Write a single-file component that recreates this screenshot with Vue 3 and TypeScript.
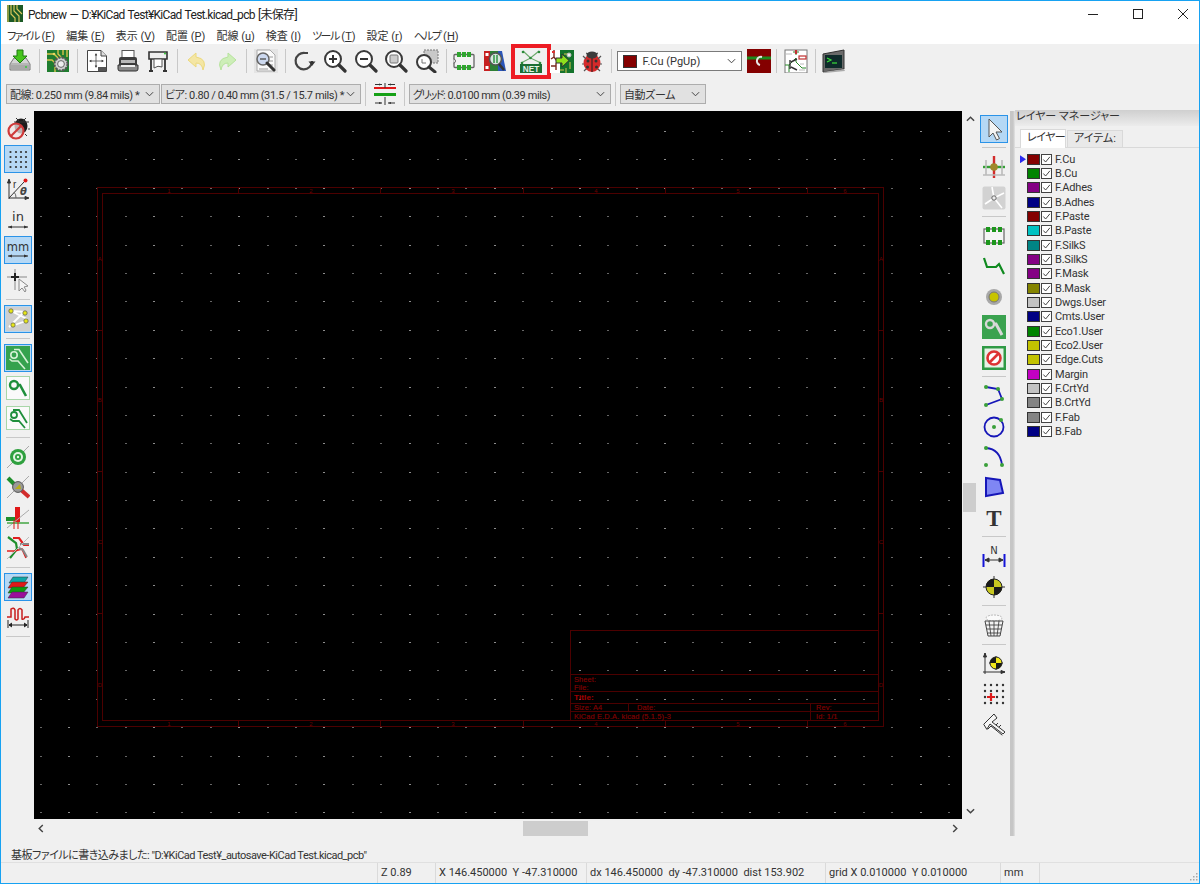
<script setup lang="ts">
const S = 'stroke-linecap="round" stroke-linejoin="round"'

// inner svg markup of every toolbar icon, 24x24 box
const icons: Record<string, string> = {
  save: `<path d="M2 15 L6 9 H18 L22 15 V21 H2Z" fill="#d4d4d4" stroke="#777"/><path d="M2 15 H22" stroke="#999"/><rect x="3" y="16" width="18" height="4.5" fill="#a9a9a9"/><circle cx="18" cy="18" r="1" fill="#37c837"/><path d="M9 1 H15 V7 H19 L12 14 L5 7 H9Z" fill="#46c41c" stroke="#1f7a10"/>`,
  pcbgear: `<rect x="1" y="1" width="22" height="22" fill="#1f7d2f"/><path d="M1 5 H8 L13 10 M1 11 H6 L9 14 V23 M12 1 V5 L15 8 M17 1 V6 M21 1 V8" stroke="#d8c24c" stroke-width="1.4" fill="none"/><circle cx="8" cy="5" r="1.3" fill="#e8d860"/><circle cx="15" cy="15" r="6.5" fill="#d0d0d0" stroke="#555" stroke-dasharray="2.2 1.2" stroke-width="2"/><circle cx="15" cy="15" r="3.4" fill="#eee" stroke="#666"/>`,
  page: `<path d="M2.5 1.5 H16 L21.5 7 V22.5 H2.5Z" fill="#fff" stroke="#444"/><path d="M16 1.5 V7 H21.5" fill="#ddd" stroke="#444"/><path d="M11 5 V18 M5 12 H18" stroke="#444" stroke-width=".8"/><path d="M11 4 l-1.2 2.4 h2.4Z M11 19 l-1.2 -2.4 h2.4Z M4 12 l2.4 -1.2 v2.4Z M19 12 l-2.4 -1.2 v2.4Z" fill="#333"/><rect x="13" y="18" width="8" height="4" fill="#555"/>`,
  print: `<rect x="6" y="1.5" width="12" height="7" fill="#fff" stroke="#555"/><path d="M3 10 Q3 8 5 8 H19 Q21 8 21 10 V19 H3Z" fill="#3e3e3e"/><rect x="5" y="11" width="14" height="3" fill="#b8b8b8"/><path d="M2 16 H22 V20 Q22 22 20 22 H4 Q2 22 2 20Z" fill="#888" stroke="#333"/><rect x="5" y="16" width="14" height="2" fill="#eee"/>`,
  plot: `<path d="M3 3 H21 V10 H3Z" fill="#eee" stroke="#333" stroke-width="1.6"/><circle cx="19" cy="4.5" r="1" fill="#2fbf2f"/><path d="M5 10 V22 M19 10 V22 M3 22 H7 M17 22 H21" stroke="#333" stroke-width="1.8" fill="none"/><path d="M8 10 H16 V18 Q12 16 8 19Z" fill="#fff" stroke="#555"/>`,
  undo: `<path d="M11 4 L3 11 L11 18 V14 Q17 14 18 21 Q23 10 11 8Z" fill="#f4e6a4" stroke="#ecd97c"/>`,
  redo: `<path d="M13 4 L21 11 L13 18 V14 Q7 14 6 21 Q1 10 13 8Z" fill="#cdeeb8" stroke="#b6e39c"/>`,
  find: `<rect x="0" y="0" width="24" height="24" fill="#e4e4e4"/><path d="M3 1 H16 L21 6 V22 H3Z" fill="#fafafa" stroke="#aaa"/><path d="M14 8 H19 M15 12 H19 M14 16 H19 M5 20 H14" stroke="#9a9a9a"/><circle cx="9" cy="10" r="6" fill="#cdd9ef" stroke="#666" stroke-width="1.5"/><path d="M6 10 H12" stroke="#555" stroke-width="1.4"/><path d="M13 14 L20 21" stroke="#333" stroke-width="3" stroke-linecap="round"/>`,
  redraw: `<path d="M19 12 A8.2 8.2 0 1 1 12 4 H15" fill="none" stroke="#444" stroke-width="2.2"/><path d="M15.5 12.5 H22.5 L19 17Z" fill="#333"/>`,
  zoomin: `<circle cx="10" cy="10" r="8" fill="#fff" stroke="#3a3a3a" stroke-width="2"/><path d="M6 10 H14 M10 6 V14" stroke="#333" stroke-width="2"/><path d="M16 16 L22 22" stroke="#333" stroke-width="3.2" stroke-linecap="round"/>`,
  zoomout: `<circle cx="10" cy="10" r="8" fill="#fff" stroke="#3a3a3a" stroke-width="2"/><path d="M6 10 H14" stroke="#333" stroke-width="2"/><path d="M16 16 L22 22" stroke="#333" stroke-width="3.2" stroke-linecap="round"/>`,
  zoomfit: `<circle cx="10" cy="10" r="8" fill="#fff" stroke="#3a3a3a" stroke-width="2"/><rect x="6" y="6" width="8" height="8" rx="1" fill="#ccc" stroke="#777"/><path d="M16 16 L22 22" stroke="#333" stroke-width="3.2" stroke-linecap="round"/>`,
  zoomsel: `<rect x="9" y="1" width="14" height="13" fill="#c8c8c8" stroke="#777" stroke-dasharray="2 1"/><circle cx="9" cy="13" r="7" fill="#fff" stroke="#3a3a3a" stroke-width="2"/><path d="M7 10 V14 H11" fill="none" stroke="#777"/><path d="M14 18 L20 23" stroke="#333" stroke-width="3" stroke-linecap="round"/>`,
  footprint: `<rect x="2" y="5.5" width="20" height="13" fill="#f3f3f3" stroke="#666" stroke-width="1.3" rx="1"/><path d="M1.5 10 a2 2 0 0 1 0 4" fill="#f0f0f0" stroke="#666"/><path d="M5 3 h4 v5 h-4Z M10 3 h4 v5 h-4Z M15 3 h4 v5 h-4Z M5 16 h4 v5 h-4Z M10 16 h4 v5 h-4Z M15 16 h4 v5 h-4Z" fill="#2fa52f"/>`,
  lib: `<rect x="1" y="2" width="8" height="20" fill="#c62020"/><rect x="2.5" y="4" width="3" height="3" fill="#fff"/><rect x="2.5" y="17" width="3" height="3" fill="#fff"/><rect x="7" y="2" width="8" height="20" fill="#2d7f35"/><path d="M15 2 H19 L23 22 H15Z" fill="#2a55b8"/><circle cx="12.5" cy="10" r="6" fill="#d8e7e0" stroke="#555" stroke-width="1.6"/><path d="M11 6 V14 M14 6 V14" stroke="#3c9a50" stroke-width="1.6"/><path d="M16 15 L21 21" stroke="#333" stroke-width="2.6"/>`,
  net: `<path d="M4 2 L11.5 9 L20 2 M2 14 L11.5 9 L22 14" fill="none" stroke="#6ba86b" stroke-width="1.1"/><circle cx="4" cy="3" r="1.3" fill="#2c8a3a"/><circle cx="20" cy="3" r="1.3" fill="#2c8a3a"/><circle cx="11.5" cy="9" r="1.3" fill="#2c8a3a"/><circle cx="3" cy="14" r="1.3" fill="#2c8a3a"/><circle cx="21" cy="14" r="1.3" fill="#2c8a3a"/><rect x="1" y="15" width="22" height="9" fill="#1c6e34"/><text x="12" y="22.6" text-anchor="middle" font-family="Liberation Sans, sans-serif" font-size="8.2" font-weight="700" fill="#e8f2e8">NET</text>`,
  update: `<rect x="0" y="1" width="10" height="23" fill="#fff"/><path d="M4 1 V8 M4 8 L1 10 M4 8 L7 12 M1 17 H6 M6 14 V21" stroke="#7a2a20" stroke-width="1.4" fill="none"/><rect x="2" y="2" width="3" height="2" fill="#d33"/><rect x="10" y="1" width="14" height="23" fill="#14732c"/><path d="M14 5 H20 M16 19 V24 M20 13 V20 M10 21 H14" stroke="#d8c24c" fill="none"/><circle cx="19" cy="6" r="2" fill="#f3f3f3" stroke="#bbb"/><path d="M6 9 H12 V5 L19 11.5 L12 18 V14 H6Z" fill="#8de01d" stroke="#333"/>`,
  bug: `<ellipse cx="12" cy="14" rx="8.5" ry="9" fill="#d62a2a"/><path d="M12 5 V23" stroke="#222"/><path d="M6 4 Q9 6 12 6 Q15 6 18 4" fill="none" stroke="#333"/><ellipse cx="12" cy="6" rx="5.5" ry="3.4" fill="#3c3c3c"/><path d="M3 7 L6 10 M21 7 L18 10 M2 15 H4 M22 15 H20 M4 22 L6 20 M20 22 L18 20" stroke="#555" stroke-width="1.2"/><circle cx="8" cy="12" r="1.5" fill="#333"/><circle cx="16" cy="12" r="1.5" fill="#333"/><circle cx="7.5" cy="18" r="1.5" fill="#333"/><circle cx="16.5" cy="18" r="1.5" fill="#333"/>`,
  via: `<rect x="0" y="0" width="24" height="24" fill="#840000"/><path d="M0 9 H24" stroke="#1e8a1e" stroke-width="3"/><path d="M15 8 A4 4 0 1 0 13 16" fill="none" stroke="#e8e8e8" stroke-width="2"/>`,
  sch: `<rect x="1" y="1" width="22" height="23" fill="#fff" stroke="#777"/><path d="M12 1 V6 M9 3 H15 M12 13 V9 L5 16 V23 M12 13 L18 19 H22 M5 16 H1" stroke="#2a8a2a" fill="none"/><path d="M12 1 V5" stroke="#c03030" stroke-width="2.2"/><rect x="15" y="7" width="7" height="3" fill="#fff" stroke="#c03030" stroke-width="1.2"/><path d="M6 11 V20 M7 13 L13 10 M7 18 L13 21" stroke="#333" stroke-width="1.4"/><path d="M16 15 H20 M2 5 H8 M15 21 H21" stroke="#bbb"/>`,
  term: `<path d="M1 5 L22 1 V20 L1 23Z" fill="#6a6a6a" stroke="#333"/><rect x="3" y="6" width="17" height="13" fill="#0e2a2a"/><path d="M5 9 L9 11 L5 13" fill="none" stroke="#3be03b" stroke-width="1.2"/><path d="M10 14 H15" stroke="#3be03b" stroke-width="1.2"/><path d="M1 23 L22 20 L23 22 L3 24Z" fill="#aaa"/>`,

  bugoff: `<ellipse cx="15" cy="9" rx="6.5" ry="7.5" fill="#1c1c1c"/><path d="M10 1 L13 4 M20 1 L17 4 M8 5 H23 M22 12 H24 M19 17 L21 19" stroke="#333"/><circle cx="10" cy="14" r="7.5" fill="#f1e4e4" fill-opacity=".75" stroke="#cf3a3a" stroke-width="2.2"/><path d="M5 19 L15 9" stroke="#cf3a3a" stroke-width="2.2"/>`,
  grid: `<g fill="#333"><circle cx="4.5" cy="5" r="1.1"/><circle cx="10" cy="5" r="1.1"/><circle cx="15" cy="5" r="1.1"/><circle cx="20" cy="5" r="1.1"/><circle cx="4.5" cy="10" r="1.1"/><circle cx="10" cy="10" r="1.1"/><circle cx="15" cy="10" r="1.1"/><circle cx="20" cy="10" r="1.1"/><circle cx="4.5" cy="15" r="1.1"/><circle cx="10" cy="15" r="1.1"/><circle cx="15" cy="15" r="1.1"/><circle cx="20" cy="15" r="1.1"/><circle cx="4.5" cy="20" r="1.1"/><circle cx="10" cy="20" r="1.1"/><circle cx="15" cy="20" r="1.1"/><circle cx="20" cy="20" r="1.1"/></g>`,
  polar: `<path d="M3 22 V3 M1.5 6 L3 2 L4.5 6Z M3 21 H22 M19 19.5 L23 21 L19 22.5Z" stroke="#333" fill="#333"/><path d="M3 21 L18 5" stroke="#333"/><path d="M10 21 A8 8 0 0 0 8 15" fill="none" stroke="#666"/><circle cx="19.5" cy="3.5" r="2" fill="#e01818"/><text x="7" y="11" font-family="Liberation Sans, sans-serif" font-size="10" fill="#333">r</text><text x="14" y="18" font-family="DejaVu Sans, sans-serif" font-size="10" font-style="italic" font-weight="700" fill="#444">θ</text>`,
  inch: `<text x="12" y="13" text-anchor="middle" font-family="DejaVu Sans, sans-serif" font-size="13" fill="#333">in</text><path d="M2 19 H22" stroke="#333"/><path d="M6 17.5 L2 19 L6 20.5Z M18 17.5 L22 19 L18 20.5Z" fill="#333"/>`,
  mm: `<text x="12" y="12.5" text-anchor="middle" font-family="DejaVu Sans, sans-serif" font-size="11.5" fill="#333">mm</text><path d="M2 18 H22" stroke="#333"/><path d="M6 16.5 L2 18 L6 19.5Z M18 16.5 L22 18 L18 19.5Z" fill="#333"/>`,
  cursor: `<path d="M9 1 V22 M1 9 H21" stroke="#888"/><path d="M9 5 V13 M5 9 H13" stroke="#222" stroke-width="2"/><path d="M13 11 V23 L16 20 L19 24 L20 22 L18 19 L22 18Z" fill="#f4f4f4" stroke="#888"/>`,
  ratsnest: `<rect x="0" y="0" width="24" height="24" fill="#cfcfcf"/><path d="M5 4 L21 12 M18 5 L3 20 M5 4 L20 5 M3 20 L20 14" stroke="#fff" stroke-width="1.8"/><circle cx="5" cy="4" r="2.2" fill="#e6e618" stroke="#555" stroke-width=".7"/><circle cx="19" cy="6" r="2.2" fill="#e6e618" stroke="#555" stroke-width=".7"/><circle cx="20" cy="14" r="2.2" fill="#e6e618" stroke="#555" stroke-width=".7"/><circle cx="7" cy="18" r="2.2" fill="#e6e618" stroke="#555" stroke-width=".7"/>`,
  zonefill: `<rect x="0" y="0" width="24" height="24" fill="#35a24e"/><circle cx="8" cy="9" r="3.2" fill="none" stroke="#d6f1d6" stroke-width="1.6"/><path d="M8 3.5 H13 L22 17 M3.5 13 L6 15 H12 L19 23" fill="none" stroke="#d6f1d6" stroke-width="1.6"/>`,
  zonenet: `<rect x=".5" y=".5" width="23" height="23" fill="#fafafa" stroke="#a8d6a8"/><circle cx="8" cy="9" r="4" fill="none" stroke="#1f8f3c" stroke-width="2.4"/><path d="M12 9 H14 L20 20" fill="none" stroke="#1f8f3c" stroke-width="2.6"/>`,
  zoneline: `<rect x=".5" y=".5" width="23" height="23" fill="#fafafa" stroke="#a8d6a8"/><circle cx="8" cy="9" r="3" fill="none" stroke="#1f8f3c" stroke-width="1.8"/><path d="M7 4 H13 L21 17 M4 13 L7 15 H13 L19 22" fill="none" stroke="#1f8f3c" stroke-width="1.8"/>`,
  pad: `<path d="M1 23 L23 1" stroke="#aaa"/><circle cx="12" cy="12" r="8" fill="#2fa03f"/><circle cx="12" cy="12" r="5" fill="#e4f4e4"/><circle cx="12" cy="12" r="3" fill="#2fa03f"/><circle cx="12" cy="12" r="1.2" fill="#e4f4e4"/>`,
  trackvia: `<path d="M2 3 L10 11" stroke="#1f8f2c" stroke-width="4"/><path d="M14 14 L23 22" stroke="#d22c2c" stroke-width="4"/><path d="M1 23 L23 1" stroke="#aaa"/><circle cx="12" cy="12" r="5.4" fill="#999" stroke="#555"/><path d="M9 14 L14 9 L15 14Z" fill="#b8ad1c"/>`,
  trackwide: `<path d="M1 14 H9 V12 H1Z" fill="#1f8f2c" stroke="#1f8f2c" stroke-width="2"/><path d="M9 1 H14 V16 H9Z" fill="#e01818"/><path d="M1 22 L23 4" stroke="#aaa"/><path d="M1 17 H23" stroke="#36a036" stroke-width="1.4"/><path d="M8 14 V23 M12 14 V23" stroke="#e01818"/>`,
  viacross: `<path d="M2 1 L10 7 L11 13 L4 22" fill="none" stroke="#1f8f2c" stroke-width="2.2"/><path d="M7 2 L13 2 L18 9 L23 9" fill="none" stroke="#e02020" stroke-width="2.2"/><path d="M1 15 H9 L16 13 L20 22" fill="none" stroke="#e02020" stroke-width="1.6"/><path d="M13 12 L17 14 L21 21 M14 8 H23" fill="none" stroke="#888" stroke-width="2"/><path d="M1 23 L23 1" stroke="#bbb"/>`,
  layers: `<path d="M7 2 H22 L18 8 H3Z" fill="#0fa7a7" stroke="#333" stroke-width=".5"/><path d="M6 7 H22 L17 13 H2Z" fill="#e01818" stroke="#333" stroke-width=".5"/><path d="M6 12 H22 L17 18 H2Z" fill="#109a10" stroke="#333" stroke-width=".5"/><path d="M6 17 H22 L18 23 H2Z" fill="#9a0f9a" stroke="#333" stroke-width=".5"/>`,
  length: `<path d="M1 12 H5 V4 Q8 2 9 5 V14 Q11 16 12 14 V5 Q14 2 16 5 V14 Q18 15 19 12 H23" fill="none" stroke="#c81e1e" stroke-width="1.5"/><path d="M2 15 V23 M22 15 V23 M3 20 H21 M6 18 L3 20 L6 22 M18 18 L21 20 L18 22" stroke="#222" fill="#222"/>`,

  select: `<path d="M7 2 V20 L11 16 L14.5 23 L17.5 21.5 L14 15 H20Z" fill="#f4f4f4" stroke="#555"/>`,
  hilight: `<path d="M12 1 V23" stroke="#d22c2c" stroke-width="2.4"/><path d="M1 12 H23" stroke="#36a036" stroke-width="2.4"/><path d="M4 5 V20 M20 5 V20 M1 20 H23" stroke="#bbb" stroke-width="1.6"/><circle cx="12" cy="12" r="3.8" fill="#a0882c"/>`,
  local: `<rect x=".5" y=".5" width="23" height="23" rx="2" fill="#d2d2d2"/><path d="M12 12 L3 18 M12 12 L22 7 M12 12 L20 22 M12 12 L10 1" stroke="#fff" stroke-width="1.6"/><circle cx="12" cy="12" r="2.2" fill="#eee" stroke="#666"/>`,
  module: `<rect x="2" y="5" width="20" height="14" fill="#f5f5f5" stroke="#666" stroke-width="1.2"/><path d="M4 3 h4 v5 h-4Z M10 3 h4 v5 h-4Z M16 3 h4 v5 h-4Z M4 16 h4 v5 h-4Z M10 16 h4 v5 h-4Z M16 16 h4 v5 h-4Z" fill="#1c961c"/>`,
  track: `<path d="M2 4 L5 13 H14 L17 10 L22 20" fill="none" stroke="#0f8a1f" stroke-width="2.2"/>`,
  viaicon: `<circle cx="12" cy="12" r="8" fill="#a8a8a8"/><circle cx="12" cy="12" r="5" fill="#c8c400" stroke="#777"/>`,
  zone: `<rect x="0" y="0" width="24" height="24" fill="#3aa24f"/><circle cx="8" cy="9" r="4" fill="none" stroke="#d8d8d8" stroke-width="2.4"/><path d="M12 9 H14 L20 20" fill="none" stroke="#d8d8d8" stroke-width="3"/>`,
  keepout: `<rect x="0" y="0" width="24" height="24" fill="#2f9a45"/><rect x="2.5" y="2.5" width="19" height="19" fill="#e7f2e7"/><circle cx="12" cy="12" r="6.5" fill="#fff" stroke="#d33" stroke-width="2.6"/><path d="M7.5 16.5 L16.5 7.5" stroke="#d33" stroke-width="2.6"/>`,
  polyline: `<path d="M4 3 L16 5 L20 15 L4 21" fill="none" stroke="#1616b8" stroke-width="1.8"/><circle cx="4" cy="3" r="2" fill="#3aa03a"/><circle cx="16" cy="5" r="2" fill="#3aa03a"/><circle cx="20" cy="15" r="2" fill="#3aa03a"/><circle cx="4" cy="21" r="2" fill="#3aa03a"/>`,
  circle: `<circle cx="12" cy="12" r="9.5" fill="none" stroke="#1616b8" stroke-width="1.8"/><circle cx="12" cy="12" r="2" fill="#3aa03a"/><circle cx="19" cy="5" r="2" fill="#3aa03a"/>`,
  arc: `<path d="M4 3 Q18 4 20 20" fill="none" stroke="#1616b8" stroke-width="1.8"/><circle cx="4" cy="3" r="2" fill="#3aa03a"/><circle cx="20" cy="20" r="2" fill="#3aa03a"/><circle cx="4" cy="20" r="2" fill="#3aa03a"/>`,
  poly: `<path d="M4 3 L18 5 L21 18 L4 21Z" fill="#7f86f4" stroke="#1616b8" stroke-width="2"/>`,
  textt: `<text x="12" y="20" text-anchor="middle" font-family="Liberation Serif, serif" font-size="23" font-weight="700" fill="#333">T</text>`,
  dim: `<text x="12" y="10" text-anchor="middle" font-family="DejaVu Sans, sans-serif" font-size="10" fill="#333">N</text><path d="M1.5 10 V23 M22.5 10 V23" stroke="#1414d8" stroke-width="2"/><path d="M3 16 H21 M7 14 L3 16 L7 18Z M17 14 L21 16 L17 18Z" fill="#333" stroke="#333"/>`,
  target: `<path d="M12 1 V23 M1 12 H23" stroke="#333"/><circle cx="12" cy="12" r="8" fill="#c8c820" stroke="#222"/><path d="M12 4 A8 8 0 0 0 4 12 H12Z M12 20 A8 8 0 0 0 20 12 H12Z" fill="#1a1a1a"/>`,
  trash: `<ellipse cx="12" cy="5" rx="8" ry="3" fill="#fafafa" stroke="#bbb" stroke-dasharray="2 1"/><path d="M3 8 H21 L18 23 H6Z" fill="#f2f2f2" stroke="#444"/><path d="M7 8 L9 23 M12 8 V23 M17 8 L15 23 M4 12 H20 M5 16 H19 M6 20 H18" stroke="#444" stroke-width=".9"/>`,
  origin: `<path d="M3 1 V22 M1 20 H23 M1.5 5 L3 1 L4.5 5Z M19 18.5 L23 20 L19 21.5Z" fill="#333" stroke="#333"/><path d="M14 4 V18 M7 11 H21" stroke="#333"/><circle cx="14" cy="11" r="6" fill="#f0e61c" stroke="#222"/><path d="M14 5 A6 6 0 0 0 8 11 H14Z M14 17 A6 6 0 0 0 20 11 H14Z" fill="#1a1a1a"/>`,
  gridorigin: `<g fill="#333"><circle cx="3" cy="3" r="1.2"/><circle cx="9" cy="3" r="1.2"/><circle cx="15" cy="3" r="1.2"/><circle cx="21" cy="3" r="1.2"/><circle cx="3" cy="9" r="1.2"/><circle cx="9" cy="9" r="1.2"/><circle cx="15" cy="9" r="1.2"/><circle cx="21" cy="9" r="1.2"/><circle cx="3" cy="15" r="1.2"/><circle cx="15" cy="15" r="1.2"/><circle cx="21" cy="15" r="1.2"/><circle cx="3" cy="21" r="1.2"/><circle cx="9" cy="21" r="1.2"/><circle cx="15" cy="21" r="1.2"/><circle cx="21" cy="21" r="1.2"/></g><path d="M9 11 V19 M5 15 H13" stroke="#dc1a1a" stroke-width="2.2"/>`,
  caliper: `<path d="M2 12 L12 2 L15 6 L10 10 L23 20 L21 22 L8 12 L5 17Z M6 17 L9 14 L20 23" fill="#f6f6f6" stroke="#333" stroke-width="1" ${S}/><path d="M14 13 L16 11 M17 15 L19 13" stroke="#333"/>`,
}

const menu = [
  { label: 'ファイル', key: 'F', kana: true },
  { label: '編集', key: 'E' },
  { label: '表示', key: 'V' },
  { label: '配置', key: 'P' },
  { label: '配線', key: 'u' },
  { label: '検査', key: 'I' },
  { label: 'ツール', key: 'T', kana: true },
  { label: '設定', key: 'r' },
  { label: 'ヘルプ', key: 'H', kana: true },
]

const mainTools = ['save', '|', 'pcbgear', '|', 'page', 'print', 'plot', '|', 'undo', 'redo', '|', 'find', '|', 'redraw', 'zoomin', 'zoomout', 'zoomfit', 'zoomsel', '|', 'footprint', 'lib', 'net', 'update', 'bug', '|']
const leftTools = ['bugoff', 'grid*', 'polar', 'inch', 'mm*', 'cursor', '|', 'ratsnest*', '|', 'zonefill*', 'zonenet', 'zoneline', '|', 'pad', 'trackvia', 'trackwide', 'viacross', '|', 'layers*', 'length', '|']
const rightTools = ['select*', '|', 'hilight', 'local', '|', 'module', 'track', 'viaicon', 'zone', 'keepout', '|', 'polyline', 'circle', 'arc', 'poly', 'textt', '|', 'dim', 'target', '|', 'trash', '|', 'origin', 'gridorigin', 'caliper']

const layers: [string, string][] = [
  ['F.Cu', '#840000'], ['B.Cu', '#008400'], ['F.Adhes', '#840084'], ['B.Adhes', '#000084'],
  ['F.Paste', '#840000'], ['B.Paste', '#00c2c2'], ['F.SilkS', '#008484'], ['B.SilkS', '#840084'],
  ['F.Mask', '#840084'], ['B.Mask', '#848400'], ['Dwgs.User', '#c2c2c2'], ['Cmts.User', '#000084'],
  ['Eco1.User', '#008400'], ['Eco2.User', '#c2c200'], ['Edge.Cuts', '#c2c200'], ['Margin', '#c200c2'],
  ['F.CrtYd', '#c2c2c2'], ['B.CrtYd', '#848484'], ['F.Fab', '#848484'], ['B.Fab', '#000084'],
]

// grid dots of the canvas, in window pixels
const dots: { x: number; y: number; c: string }[] = []
for (let r = 0; r < 25; r++) {
  for (let i = 0; i < 33; i++) {
    dots.push({ x: Math.round(39.5 + i * 28.39), y: Math.round(131 + r * 28.39), c: i % 3 === 1 ? '#8c8c8c' : '#666' })
  }
}

const xTicks = [238, 380, 523, 665, 807]
const yTicks = [330, 471, 613]
const xMarks = [[169, '1'], [311, '2'], [453, '3'], [596, '4'], [738, '5'], [845, '6']] as const
const yMarks = [[259, 'A'], [400, 'B'], [542, 'C'], [685, 'D']] as const

const sheetText = [
  { x: 574, y: 682, t: 'Sheet:' },
  { x: 574, y: 689.5, t: 'File:' },
  { x: 574, y: 709.5, t: 'Size: A4' },
  { x: 637, y: 709.5, t: 'Date:' },
  { x: 816, y: 709.5, t: 'Rev:' },
  { x: 574, y: 718.5, t: 'KiCad E.D.A.  kicad (5.1.5)-3' },
  { x: 816, y: 718.5, t: 'Id: 1/1' },
]

const isSep = (n: string) => n === '|'
const iconName = (n: string) => n.replace('*', '')
const isOn = (n: string) => n.endsWith('*')
</script>

<template>
  <div class="window">
    <header class="titlebar">
      <svg class="appicon" viewBox="0 0 16 17">
        <rect width="16" height="17" fill="#1c5a26" />
        <path d="M1 0 V17 M4 0 V9 L8 13 V17 M7 0 V6 L12 11 V17 M10 0 V4 L15 9" stroke="#d9c65a" stroke-width="1.2" fill="none" />
      </svg>
      <span class="title">Pcbnew — D:¥KiCad Test¥KiCad Test.kicad_pcb [未保存]</span>
      <div class="winbtns">
        <svg viewBox="0 0 10 10"><path d="M0 5.5 H10" stroke="#222" /></svg>
        <svg viewBox="0 0 10 10"><rect x=".5" y=".5" width="9" height="9" fill="none" stroke="#222" /></svg>
        <svg viewBox="0 0 10 10"><path d="M0 0 L10 10 M10 0 L0 10" stroke="#222" /></svg>
      </div>
    </header>

    <nav class="menubar">
      <span v-for="m in menu" :key="m.key" class="menuitem"><span :class="{ kana: m.kana }">{{ m.label }}</span> (<u>{{ m.key }}</u>)</span>
    </nav>

    <div class="toolbar main-tools">
      <template v-for="(t, i) in mainTools" :key="i">
        <i v-if="isSep(t)" class="sep-v"></i>
        <span v-else class="tool" :class="[t, { marked: t === 'net' }]">
          <svg class="icon" viewBox="0 0 24 24" v-html="icons[t]"></svg>
        </span>
      </template>
      <div class="layer-select">
        <span class="layer-swatch"></span>
        <span class="layer-name">F.Cu (PgUp)</span>
        <svg class="chev" viewBox="0 0 10 6"><path d="M1 1 L5 5 L9 1" fill="none" stroke="#444" stroke-width="1.1" /></svg>
      </div>
      <span class="tool narrow"><svg class="icon" viewBox="0 0 24 24" v-html="icons.via"></svg></span>
      <i class="sep-v"></i>
      <span class="tool"><svg class="icon" viewBox="0 0 24 24" v-html="icons.sch"></svg></span>
      <i class="sep-v"></i>
      <span class="tool"><svg class="icon" viewBox="0 0 24 24" v-html="icons.term"></svg></span>
    </div>

    <div class="toolbar combo-tools">
      <div class="combo w-track"><span>配線: 0.250 mm (9.84 mils) *</span><svg class="chev" viewBox="0 0 10 6"><path d="M1 1 L5 5 L9 1" fill="none" stroke="#444" stroke-width="1.1" /></svg></div>
      <div class="combo w-via"><span>ビア: 0.80 / 0.40 mm (31.5 / 15.7 mils) *</span><svg class="chev" viewBox="0 0 10 6"><path d="M1 1 L5 5 L9 1" fill="none" stroke="#444" stroke-width="1.1" /></svg></div>
      <i class="sep-v small"></i>
      <svg class="width-icon" viewBox="0 0 24 24">
        <path d="M1 6 H23" stroke="#e01818" stroke-width="2" />
        <path d="M2 2.5 H9 M15 2.5 H22 M12 1 V6 M2 21 H9 M15 21 H22 M12 15 V23" stroke="#333" />
        <path d="M1 14 H23 V11 H1Z" fill="#16a016" />
        <path d="M6 1.5 L9 2.5 L6 3.5Z M18 1.5 L15 2.5 L18 3.5Z M6 20 L9 21 L6 22Z M18 20 L15 21 L18 22Z" fill="#333" />
      </svg>
      <i class="sep-v small"></i>
      <div class="combo w-grid"><span><span class="kana">グリッド</span>: 0.0100 mm (0.39 mils)</span><svg class="chev" viewBox="0 0 10 6"><path d="M1 1 L5 5 L9 1" fill="none" stroke="#444" stroke-width="1.1" /></svg></div>
      <i class="sep-v small"></i>
      <div class="combo w-zoom"><span>自動ズーム</span><svg class="chev" viewBox="0 0 10 6"><path d="M1 1 L5 5 L9 1" fill="none" stroke="#444" stroke-width="1.1" /></svg></div>
    </div>

    <main class="workarea">
      <aside class="sidebar left">
        <template v-for="(t, i) in leftTools" :key="i">
          <i v-if="isSep(t)" class="sep-h"></i>
          <span v-else class="tool side" :class="{ on: isOn(t) }">
            <svg class="icon" viewBox="0 0 24 24" v-html="icons[iconName(t)]"></svg>
          </span>
        </template>
      </aside>

      <section class="center">
        <div class="canvas-row">
          <svg class="canvas" viewBox="34 111 928 708" shape-rendering="crispEdges">
            <rect x="34" y="111" width="928" height="708" fill="#000" />
            <rect v-for="(d, i) in dots" :key="i" :x="d.x" :y="d.y" width="2" height="1" :fill="d.c" />
            <g fill="none" stroke="#4c0000">
              <rect x="97.5" y="187.5" width="786" height="539" />
              <rect x="102.5" y="193.5" width="776" height="527" />
              <rect x="570.5" y="630.5" width="308" height="90" />
              <path d="M570 674.5 H878 M570 691.5 H878 M570 703.5 H878 M570 711.5 H878 M628.5 703 V712 M810.5 703 V721" />
              <path v-for="x in xTicks" :key="x" :d="`M${x + 0.5} 187 V193 M${x + 0.5} 721 V726`" />
              <path v-for="y in yTicks" :key="y" :d="`M97 ${y + 0.5} H102 M879 ${y + 0.5} H884`" />
            </g>
            <g class="sheet-small" shape-rendering="auto">
              <template v-for="m in xMarks" :key="m[1]">
                <text :x="m[0]" y="193" text-anchor="middle">{{ m[1] }}</text>
                <text :x="m[0]" y="726" text-anchor="middle">{{ m[1] }}</text>
              </template>
              <template v-for="m in yMarks" :key="m[1]">
                <text x="99.8" :y="m[0] + 2" text-anchor="middle">{{ m[1] }}</text>
                <text x="881" :y="m[0] + 2" text-anchor="middle">{{ m[1] }}</text>
              </template>
            </g>
            <g class="sheet-text" shape-rendering="auto">
              <text v-for="s in sheetText" :key="s.t" :x="s.x" :y="s.y">{{ s.t }}</text>
              <text class="sheet-title" x="574" y="699.5">Title:</text>
            </g>
          </svg>
          <div class="vscroll">
            <svg class="arrow" viewBox="0 0 10 6"><path d="M1 5 L5 1 L9 5" fill="none" stroke="#444" stroke-width="1.6" /></svg>
            <div class="vtrack"><span class="vthumb"></span></div>
            <svg class="arrow" viewBox="0 0 10 6"><path d="M1 1 L5 5 L9 1" fill="none" stroke="#444" stroke-width="1.6" /></svg>
          </div>
        </div>
        <div class="hscroll">
          <svg class="arrow-h" viewBox="0 0 6 10"><path d="M5 1 L1 5 L5 9" fill="none" stroke="#444" stroke-width="1.6" /></svg>
          <div class="htrack"><span class="hthumb"></span></div>
          <svg class="arrow-h" viewBox="0 0 6 10"><path d="M1 1 L5 5 L1 9" fill="none" stroke="#444" stroke-width="1.6" /></svg>
        </div>
      </section>

      <aside class="sidebar right">
        <template v-for="(t, i) in rightTools" :key="i">
          <i v-if="isSep(t)" class="sep-h"></i>
          <span v-else class="tool side" :class="{ on: isOn(t) }">
            <svg class="icon" viewBox="0 0 24 24" v-html="icons[iconName(t)]"></svg>
          </span>
        </template>
      </aside>

      <div class="sash"></div>

      <section class="manager">
        <div class="caption">レイヤー マネージャー</div>
        <div class="tabs">
          <span class="tab active">レイヤー</span>
          <span class="tab">アイテム:</span>
        </div>
        <ul class="layerlist">
          <li v-for="(l, i) in layers" :key="l[0]" class="layerrow">
            <span class="pointer" :class="{ show: i === 0 }"></span>
            <span class="swatch" :style="{ background: l[1] }"></span>
            <span class="check">
              <svg viewBox="0 0 10 10"><path d="M1.5 5 L4 7.8 L8.8 2" fill="none" stroke="#333" stroke-width="1" /></svg>
            </span>
            <span class="layername">{{ l[0] }}</span>
          </li>
        </ul>
      </section>
    </main>

    <div class="message">基板ファイルに書き込みました: "D:¥KiCad Test¥_autosave-KiCad Test.kicad_pcb"</div>

    <footer class="statusbar">
      <span class="pane p0"></span>
      <span class="pane p1">Z 0.89</span>
      <span class="pane p2">X 146.450000&nbsp; Y -47.310000</span>
      <span class="pane p3">dx 146.450000&nbsp; dy -47.310000&nbsp; dist 153.902</span>
      <span class="pane p4">grid X 0.010000&nbsp; Y 0.010000</span>
      <span class="pane p5">mm</span>
      <span class="pane p6">
        <svg class="grip" viewBox="0 0 9 9" fill="#a8a8a8">
          <rect x="7" y="1" width="1.5" height="1.5" /><rect x="4" y="4" width="1.5" height="1.5" /><rect x="7" y="4" width="1.5" height="1.5" />
          <rect x="1" y="7" width="1.5" height="1.5" /><rect x="4" y="7" width="1.5" height="1.5" /><rect x="7" y="7" width="1.5" height="1.5" />
        </svg>
      </span>
    </footer>
  </div>
</template>

<style>
html,
body {
  margin: 0;
  background: #f0f0f0;
}
</style>

<style scoped>
.window {
  width: 1200px;
  height: 884px;
  box-sizing: border-box;
  border: 1px solid #17a2f2;
  display: flex;
  flex-direction: column;
  overflow: hidden;
  background: #f0f0f0;
  color: #333;
  font-family: Roboto, "Noto Sans CJK JP", sans-serif;
  font-size: 11px;
  font-feature-settings: "palt";
}

.titlebar {
  height: 25px;
  flex: none;
  background: #fff;
  display: flex;
  align-items: center;
  padding-left: 6px;
  font-size: 12px;
  color: #222;
}
.title {
  letter-spacing: -0.7px;
  word-spacing: 1px;
}
.appicon {
  width: 16px;
  height: 17px;
  margin-right: 5px;
}
.winbtns {
  margin-left: auto;
  display: flex;
  gap: 35px;
  padding-right: 11px;
}
.winbtns svg {
  width: 10px;
  height: 10px;
}

.menubar {
  height: 18px;
  flex: none;
  background: #fff;
  display: flex;
  align-items: center;
  gap: 11px;
  padding-left: 6px;
  font-size: 11px;
}
.kana {
  letter-spacing: -1.6px;
}

.toolbar {
  flex: none;
  display: flex;
  align-items: center;
}
.main-tools {
  height: 34px;
  padding-left: 3.5px;
}
.combo-tools {
  height: 32px;
  padding-left: 5px;
}

.tool {
  width: 30.6px;
  height: 30.4px;
  flex: none;
  display: flex;
  align-items: center;
  justify-content: center;
  box-sizing: border-box;
  position: relative;
}
.tool.narrow {
  width: 28px;
  margin-left: 3px;
}
.tool.footprint {
  margin-left: -1.5px;
}
.icon {
  width: 24px;
  height: 24px;
  display: block;
}
.tool.marked {
  margin: 0 -0.3px 0 6.2px;
}
.marked::after {
  content: "";
  position: absolute;
  left: -4.7px;
  right: -4.7px;
  top: -1.5px;
  height: 35px;
  box-sizing: border-box;
  border: 4px solid #ed1c24;
}

.sep-v {
  width: 1px;
  height: 24px;
  margin: 0 3.5px;
  flex: none;
  background: #c8c8c8;
}
.sep-v.small {
  margin: 0 4px;
}

.layer-select {
  width: 125px;
  height: 20px;
  margin-left: 1px;
  flex: none;
  box-sizing: border-box;
  background: #fff;
  border: 1px solid #7a7a7a;
  display: flex;
  align-items: center;
  padding: 0 5px 0 5px;
}
.layer-swatch {
  width: 12px;
  height: 11px;
  background: #840000;
  border: 1px solid #333;
  margin-right: 6px;
}
.layer-name {
  flex: 1;
}
.chev {
  width: 9px;
  height: 6px;
  flex: none;
}

.combo {
  height: 20px;
  flex: none;
  box-sizing: border-box;
  background: #e1e1e1;
  border: 1px solid #adadad;
  display: flex;
  align-items: center;
  justify-content: space-between;
  padding: 0 5px 0 3px;
  white-space: nowrap;
  letter-spacing: -0.4px;
}
.w-track {
  width: 154px;
  margin-right: 1px;
}
.w-via {
  width: 200px;
}
.w-grid {
  width: 202px;
}
.w-zoom {
  width: 86px;
}
.width-icon {
  width: 24px;
  height: 24px;
  margin: 0 3px;
  flex: none;
}

.workarea {
  height: 726px;
  flex: none;
  display: flex;
}
.sidebar {
  flex: none;
  width: 32px;
  display: flex;
  flex-direction: column;
  align-items: center;
  padding-top: 3.4px;
  box-sizing: border-box;
}
.sidebar.left {
  width: 33px;
}
.tool.side {
  width: 28px;
  height: 28px;
  margin: 1.2px 0;
}
.tool.on {
  background: #b5d8f5;
  border: 1px solid #2a93e8;
}
.sep-h {
  width: 24px;
  height: 1px;
  margin: 3.6px 0;
  flex: none;
  background: #c8c8c8;
}

.center {
  flex: none;
  width: 944px;
  display: flex;
  flex-direction: column;
}
.canvas-row {
  margin-top: 1px;
  height: 708px;
  display: flex;
  flex: none;
}
.canvas {
  width: 928px;
  height: 708px;
  display: block;
  flex: none;
}
.sheet-small text {
  font: 6px "Liberation Sans", sans-serif;
  fill: #6a0000;
}
.sheet-text text {
  font: 7.4px "Liberation Sans", sans-serif;
  letter-spacing: 0.15px;
  fill: #8a0000;
  stroke: #6a0000;
  stroke-width: 0.2px;
}
.sheet-text .sheet-title {
  font-weight: 700;
  font-size: 8px;
  fill: #a80000;
}

.vscroll {
  width: 16px;
  flex: none;
  display: flex;
  flex-direction: column;
  align-items: center;
  padding: 5px 0;
  box-sizing: border-box;
}
.arrow {
  width: 9px;
  height: 6px;
  flex: none;
}
.vtrack {
  flex: 1;
  width: 100%;
}
.vthumb {
  display: block;
  width: 13px;
  height: 29px;
  margin: 361px 0 0 1px;
  background: #cdcdcd;
}
.hscroll {
  height: 16px;
  margin-top: 1px;
  width: 928px;
  flex: none;
  display: flex;
  align-items: center;
  padding: 0 4px;
  box-sizing: border-box;
}
.arrow-h {
  width: 6px;
  height: 9px;
  flex: none;
}
.htrack {
  flex: 1;
}
.hthumb {
  display: block;
  width: 65px;
  height: 15px;
  margin-left: 479px;
  background: #cdcdcd;
}

.sash {
  width: 5px;
  flex: none;
  margin-top: 1px;
  background: linear-gradient(90deg, #c6c6c6, #c6c6c6 60%, #e4e4e4);
}
.manager {
  flex: 1;
  min-width: 0;
}
.caption {
  height: 16px;
  padding-left: 1px;
  line-height: 14px;
  background: linear-gradient(#cfcfcf, #ececec);
  color: #333;
  font-size: 11px;
}
.tabs {
  display: flex;
  align-items: flex-end;
  height: 22px;
  padding-left: 5px;
  border-bottom: 1px solid #d9d9d9;
  box-sizing: border-box;
  white-space: nowrap;
}
.tab {
  height: 17px;
  line-height: 16px;
  padding: 0 6px;
  margin-right: 1px;
  box-sizing: border-box;
  border: 1px solid #d9d9d9;
  border-bottom: none;
  background: #e9e9e9;
}
.tab.active {
  height: 19px;
  background: #fff;
  width: 46px;
  margin-bottom: -1px;
  letter-spacing: -0.5px;
}
.layerlist {
  margin: 0;
  padding: 4px 0 0 5px;
  list-style: none;
}
.layerrow {
  height: 14.33px;
  display: flex;
  align-items: center;
}
.pointer {
  width: 6px;
  height: 8px;
  flex: none;
  margin-right: 1px;
}
.pointer.show {
  background: #2a2af0;
  clip-path: polygon(0 0, 100% 50%, 0 100%);
}
.swatch {
  width: 13px;
  height: 11px;
  flex: none;
  margin-right: 1px;
  box-sizing: border-box;
  border: 1px solid #333;
}
.check {
  width: 11px;
  height: 11px;
  flex: none;
  box-sizing: border-box;
  background: #fff;
  border: 1px solid #444;
  display: flex;
}
.check svg {
  width: 9px;
  height: 9px;
}
.layername {
  margin-left: 3px;
  letter-spacing: -0.2px;
}

.message {
  flex: 1;
  display: flex;
  align-items: center;
  padding: 9px 0 0 10px;
  border-bottom: 1px solid #e0e0e0;
  letter-spacing: -0.5px;
}
.statusbar {
  height: 20px;
  flex: none;
  display: flex;
}
.pane {
  box-sizing: border-box;
  border-left: 1px solid #dadada;
  padding-left: 3px;
  line-height: 20px;
  white-space: nowrap;
}
.p0 {
  width: 376px;
  border-left: none;
}
.p1 {
  width: 58px;
}
.p2 {
  width: 151px;
}
.p3 {
  width: 239px;
}
.p4 {
  width: 175px;
}
.p5 {
  width: 39px;
}
.p6 {
  flex: 1;
  display: flex;
  justify-content: flex-end;
  align-items: flex-end;
}
.grip {
  width: 9px;
  height: 9px;
  margin: 0 1px 2px 0;
}
</style>
